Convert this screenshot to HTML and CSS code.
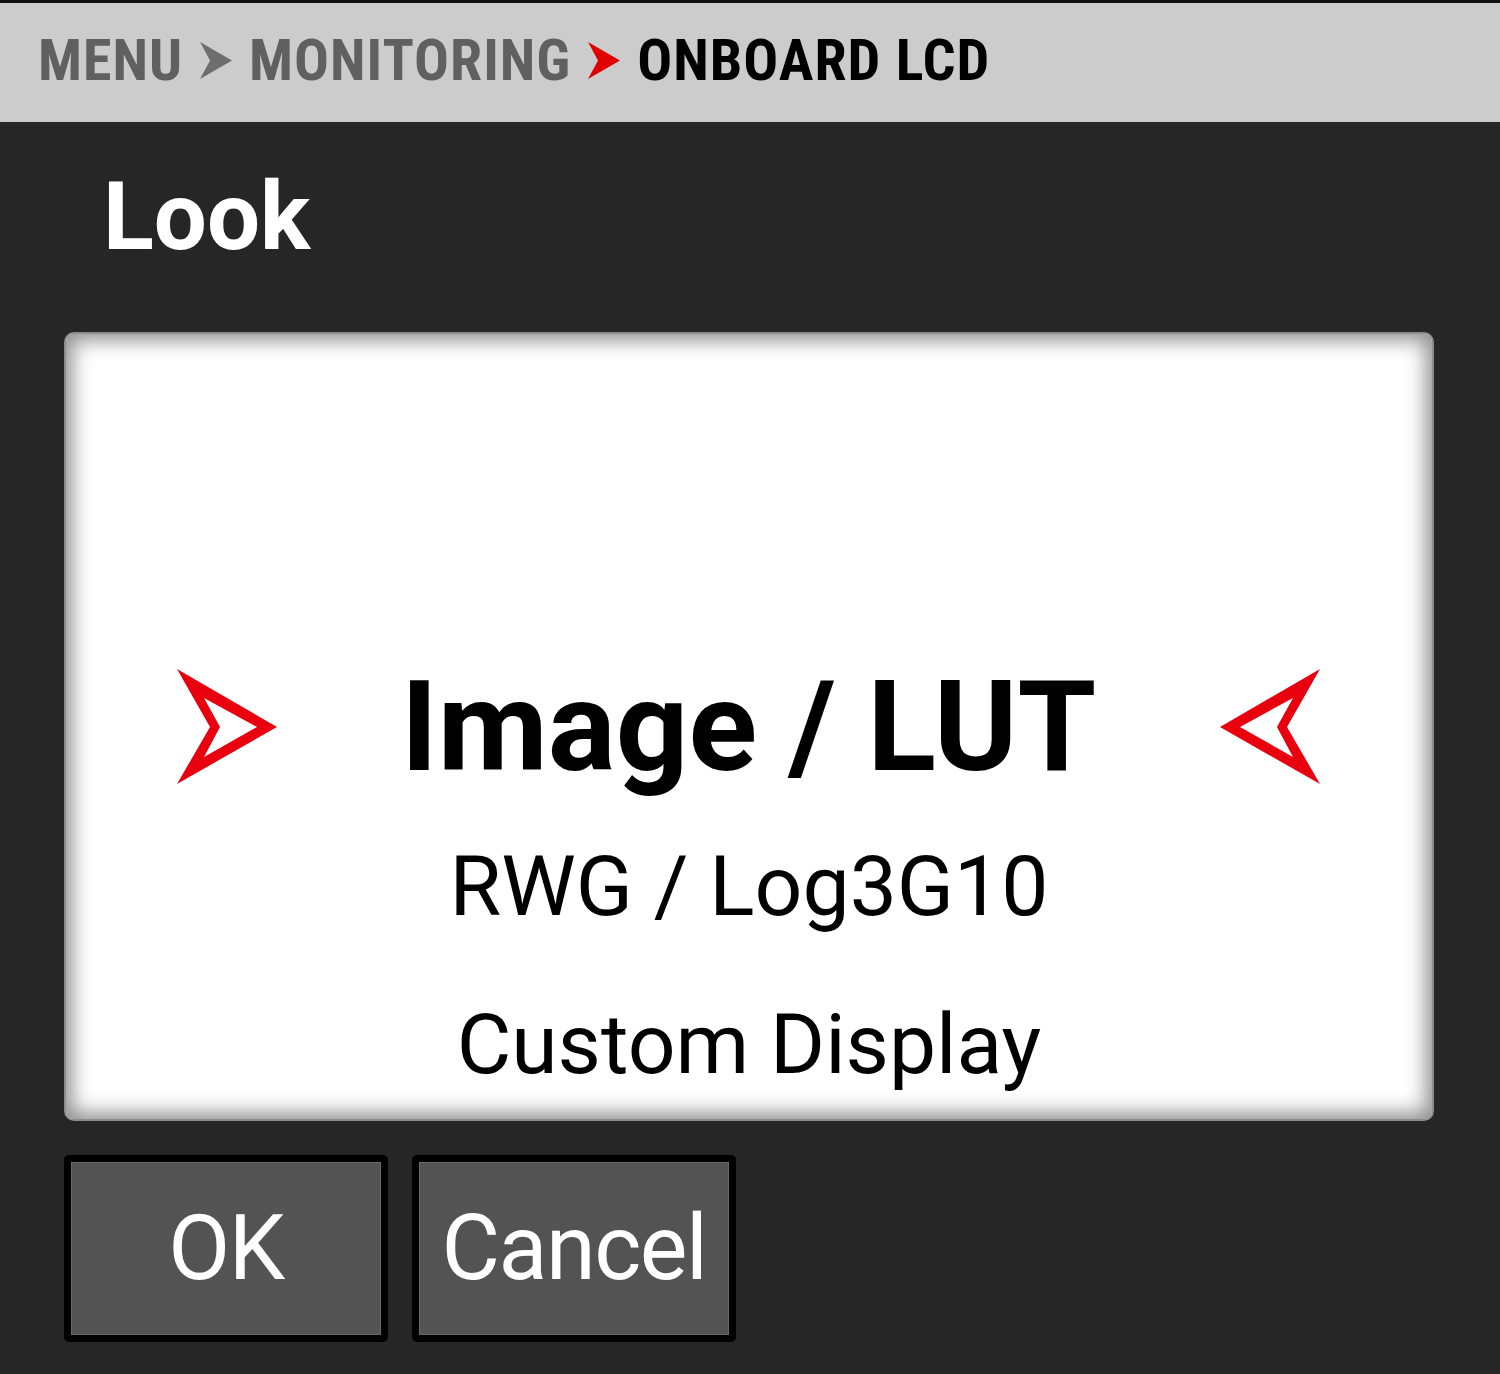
FILE: index.html
```html
<!DOCTYPE html>
<html lang="en">
	<head>
		<meta charset="utf-8">
		<title>Look</title>
		<link rel="stylesheet" href="styles.css">
	</head>
	<body>
		<header class="trilha">
			<span class="passo">MENU</span>
			<svg class="seta" viewBox="0 0 32 37"><polygon points="0,0 32,18.5 0,37 10,18.5" fill="#6e6e6e"/></svg>
			<span class="passo">MONITORING</span>
			<svg class="seta" viewBox="0 0 32 37"><polygon points="0,0 32,18.5 0,37 10,18.5" fill="#e00000"/></svg>
			<span class="passo atual">ONBOARD LCD</span>
		</header>

		<h1 class="titulo">Look</h1>

		<div class="cartao">
			<div class="linha escolhida">
				<svg class="cursor" viewBox="0 0 100 115"><path fill-rule="evenodd" fill="#e8000f" d="M0,0 L100,58 L0,115 L33,58 Z M27,29 L43,58 L27,88 L80,58 Z"/></svg>
				<span>Image / LUT</span>
				<svg class="cursor" viewBox="0 0 100 115"><path fill-rule="evenodd" fill="#e8000f" d="M100,0 L0,58 L100,115 L67,58 Z M73,29 L57,58 L73,88 L20,58 Z"/></svg>
			</div>
			<div class="linha segunda">RWG / Log3G10</div>
			<div class="linha terceira">Custom Display</div>
		</div>

		<div class="botoes">
			<div class="botao">OK</div>
			<div class="botao">Cancel</div>
		</div>
	</body>
</html>
```

FILE: styles.css
```css
* {
	margin: 0;
	padding: 0;
	box-sizing: border-box;
}

body {
	background-color: #262626;
	font-family: Roboto, "Liberation Sans", sans-serif;
	width: 1500px;
	height: 1374px;
	overflow: hidden;
}

.trilha {
	height: 122px;
	background-color: #cccccc;
	border-top: 3px solid #111;
	display: flex;
	align-items: center;
	gap: 17px;
	padding-left: 38px;
	padding-bottom: 5px;
}

	.passo {
		font-size: 58px;
		font-weight: bold;
		color: #606060;
		letter-spacing: 1px;
		line-height: 1;
		font-stretch: condensed;
	}

	.passo.atual {
		color: #000;
	}

	.seta {
		width: 32px;
		height: 37px;
		flex: none;
	}

.titulo {
	font-size: 94px;
	font-weight: bold;
	color: #fff;
	line-height: 1;
	height: 210px;
	padding: 48px 0 0 103px;
}

.cartao {
	margin: 0 66px 0 64px;
	height: 789px;
	background-color: #fff;
	border: 2px solid #8c8c8c;
	border-radius: 10px;
	box-shadow: inset 0 0 20px 6px rgba(0, 0, 0, 0.45);
	padding-top: 317px;
	text-align: center;
	color: #000;
}

	.linha {
		font-size: 84px;
	}

	.escolhida {
		display: flex;
		align-items: center;
		justify-content: space-between;
		padding: 0 112px 0 111px;
		height: 150px;
		font-size: 127px;
		font-weight: bold;
		line-height: 150px;
	}

		.escolhida span {
			position: relative;
			top: 1px;
		}

		.cursor {
			width: 100px;
			height: 115px;
		}

	.segunda {
		line-height: 171px;
	}

	.terceira {
		line-height: 146px;
	}

.botoes {
	display: flex;
	gap: 24px;
	padding: 34px 0 0 64px;
}

	.botao {
		width: 324px;
		height: 187px;
		background-color: #535353;
		border: 7px solid #000;
		border-radius: 5px;
		box-shadow: inset 0 0 0 1px #6a6a6a;
		color: #fff;
		font-size: 90px;
		display: flex;
		align-items: center;
		justify-content: center;
		letter-spacing: -1.5px;
	}
```
